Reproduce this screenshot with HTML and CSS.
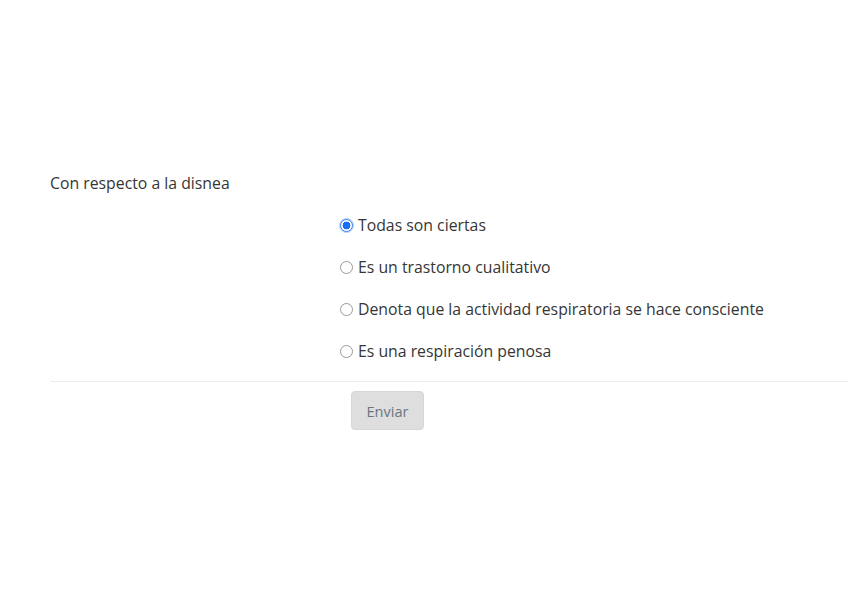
FILE: index.html
```html
<!DOCTYPE html>
<html lang="es">
<head>
<meta charset="utf-8">
<title>Pregunta</title>
<link rel="stylesheet" href="styles.css">
</head>
<body>
<form class="quiz">
  <div class="question">Con respecto a la disnea</div>
  <div class="options">
    <label class="option"><input type="radio" name="q" checked><span>Todas son ciertas</span></label>
    <label class="option"><input type="radio" name="q"><span>Es un trastorno cualitativo</span></label>
    <label class="option"><input type="radio" name="q"><span>Denota que la actividad respiratoria se hace consciente</span></label>
    <label class="option"><input type="radio" name="q"><span>Es una respiración penosa</span></label>
  </div>
  <hr class="divider">
  <div class="actions">
    <button type="button" class="submit">Enviar</button>
  </div>
</form>
</body>
</html>
```

FILE: styles.css
```css
html, body {
  margin: 0;
  padding: 0;
  background: #ffffff;
}
body {
  font-family: "Open Sans", "Segoe UI", sans-serif;
  font-size: 15.8px;
  color: #363636;
}
.quiz {
  padding: 173px 0 0 50px;
}
.question {
  line-height: 20px;
  height: 20px;
}
.options {
  margin: 11px 0 0 290px;
  display: flex;
  flex-direction: column;
}
.option {
  display: flex;
  align-items: center;
  height: 42px;
}
.option input {
  appearance: none;
  -webkit-appearance: none;
  box-sizing: border-box;
  margin: 0 5px 0 0;
  width: 13px;
  height: 13px;
  border: 1px solid #9a9a9a;
  border-radius: 50%;
  background: #ffffff;
}
.option input:checked {
  border-color: #2f7cf0;
  background: radial-gradient(circle, #1a6ef5 0 3.6px, #ffffff 4.2px);
  box-shadow: 0 0 0 1px #b9d3fb;
}
.divider {
  margin: 9px 0 0 0;
  border: 0;
  border-top: 1px solid #ececec;
  height: 0;
}
.actions {
  padding: 9px 0 0 301px;
}
.submit {
  width: 73px;
  height: 39px;
  border: 1px solid #d6d6d6;
  border-radius: 4px;
  background: #dedede;
  color: #6c757d;
  font-family: "Open Sans", "Segoe UI", sans-serif;
  font-size: 14.6px;
}
```
